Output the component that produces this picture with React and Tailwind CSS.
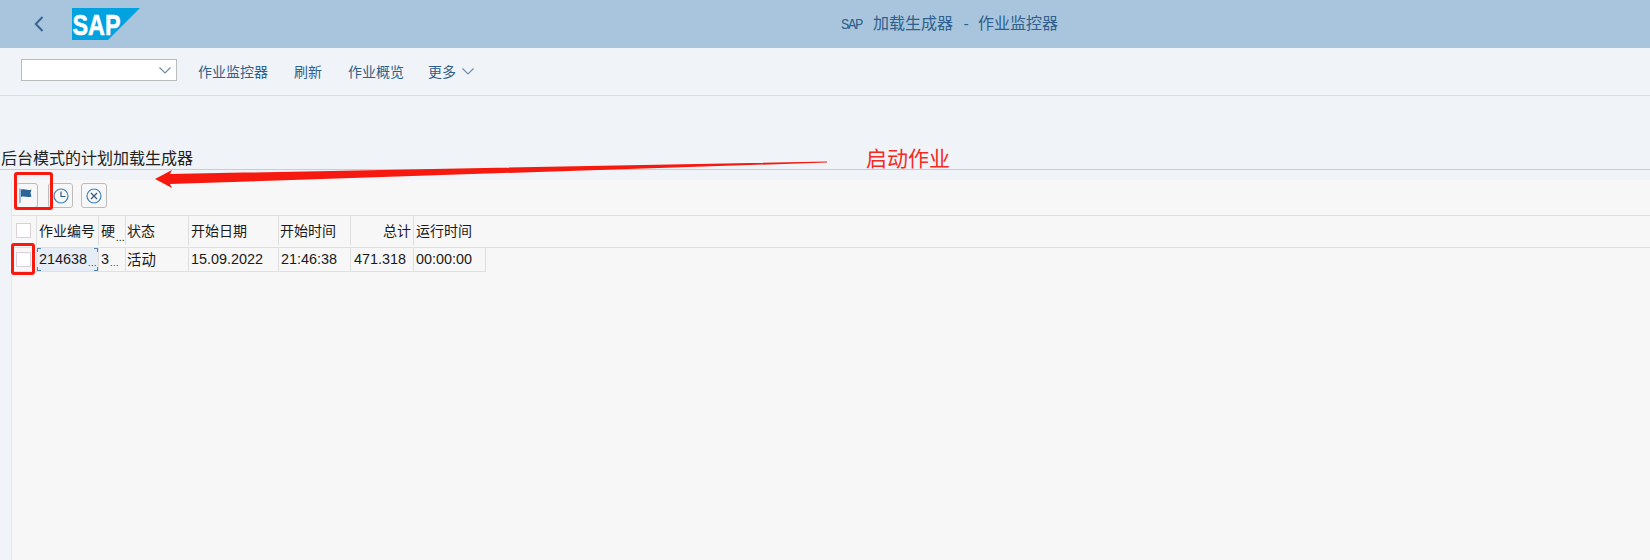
const cjk = { fontFamily: '"Noto Sans CJK SC", sans-serif' };
const mono = { fontFamily: '"Liberation Mono", monospace' };
const data = { fontFamily: '"Liberation Sans", "Noto Sans CJK SC", sans-serif' };

const Chevron = ({ className }) => (
  <svg viewBox="0 0 12 7" className={className} fill="none" stroke="currentColor" strokeWidth="1.2">
    <path d="M0.5 0.5 L6 6 L11.5 0.5" />
  </svg>
);

const Checkbox = () => (
  <div className="w-[15px] h-[15px] bg-white border border-[#d9d0da]" />
);

const ToolButton = ({ children, className = 'w-[26px] justify-center' }) => (
  <button className={`h-[25px] ${className} flex items-center rounded-[3px] border border-[#bcbcbc] bg-[#f7f7f7]`}>
    {children}
  </button>
);

const Cell = ({ w, className = '', children }) => (
  <div
    className={`shrink-0 h-full flex items-center border-r border-[#dedede] text-[#1a1a1a] ${className}`}
    style={{ width: w }}
  >
    {children}
  </div>
);

const Dots = () => <span className="text-[9px] leading-none self-end mb-[3px] ml-[1px] tracking-[0.5px]">...</span>;

const Corner = ({ className }) => <div className={`absolute w-[4px] h-[4px] border-[#4a86b8] ${className}`} />;

const Latin = ({ children }) => <span className="text-[14px] tracking-[-1.4px]" style={mono}>{children}</span>;

export default function App() {
  return (
    <div className="relative w-full h-[560px] overflow-hidden flex flex-col bg-[#f0f4f8]" style={cjk}>
      {/* barra superior */}
      <div className="h-12 shrink-0 bg-[#a9c5dd] flex items-center relative">
        <svg viewBox="0 0 10 16" className="w-[10px] h-[16px] ml-[34px] text-[#3a6491]" fill="none" stroke="currentColor" strokeWidth="2">
          <path d="M8.5 1 L1.8 8 L8.5 15" />
        </svg>
        <svg viewBox="0 0 68 32" className="w-[68px] h-[32px] ml-[28px]">
          <polygon points="0,0 68,0 36,32 0,32" fill="#00a2e0" />
          <text x="0.5" y="27" fontFamily="Liberation Sans" fontWeight="700" fontSize="29" fill="#fff" stroke="#fff" strokeWidth="0.6" textLength="48" lengthAdjust="spacingAndGlyphs">SAP</text>
        </svg>
        <div className="absolute left-[841px] top-[11px] flex items-baseline text-[16px] leading-[22px] text-[#2f5f8c] whitespace-nowrap">
          <Latin>SAP</Latin>
          <span className="ml-[11px]">加载生成器</span>
          <span className="ml-[9px] mr-[9px]"><Latin>-</Latin></span>
          <span>作业监控器</span>
        </div>
      </div>

      {/* toolbar */}
      <div className="h-[48px] shrink-0 flex items-center border-b border-[#d5dfea] pl-[21px] text-[14px] text-[#2f5f8c]">
        <div className="w-[156px] h-[22px] mb-[3px] bg-white border border-[#bcbcbc] flex items-center justify-end pr-[5px] mr-[21px]">
          <Chevron className="w-[12px] h-[7px] text-[#6f8cab]" />
        </div>
        <span className="mr-[26px]">作业监控器</span>
        <span className="mr-[26px]">刷新</span>
        <span className="mr-[24px]">作业概览</span>
        <span className="mr-[6px]">更多</span>
        <Chevron className="w-[12px] h-[7px] text-[#6f8cab]" />
      </div>

      {/* titulo */}
      <div className="h-[74px] shrink-0 flex items-end border-b border-[#c9cdd2]">
        <div className="text-[16px] leading-[22px] text-[#222] ml-[1px] mb-[1px]">后台模式的计划加载生成器</div>
      </div>

      {/* panel */}
      <div className="flex-1 pl-[11px] pt-[10px]">
        <div className="h-full bg-[#f7f7f7] border-l border-[#e0e6ec]">
          <div className="h-[35px] flex items-start pt-[3px] pl-[4px]">
            <ToolButton className="w-[22px] justify-start pl-[2px] mr-[10px]">
              <svg viewBox="0 0 13 15" className="w-[13px] h-[15px]">
                <path d="M1 0.5 V15" stroke="#7fa9d0" strokeWidth="1.5" />
                <path d="M2 1.5 C5 0.5 8 3 12.5 1.5 L11.5 5 L12.5 8.5 C8 10 5 7.5 2 9 Z" fill="#2c6499" />
              </svg>
            </ToolButton>
            <ToolButton className="w-[25px] justify-center mr-[8px]">
              <svg viewBox="0 0 16 16" className="w-[16px] h-[16px]" fill="none" stroke="#3d81bd" strokeWidth="1.2">
                <circle cx="8" cy="8" r="7" />
                <path d="M8 3.5 V8.5 H12.5" stroke="#35597c" />
              </svg>
            </ToolButton>
            <ToolButton className="w-[26px] justify-center">
              <svg viewBox="0 0 16 16" className="w-[16px] h-[16px]" fill="none" stroke="#3d81bd" strokeWidth="1.2">
                <circle cx="8" cy="8" r="7" />
                <path d="M5 5 L11 11 M11 5 L5 11" stroke="#35597c" />
              </svg>
            </ToolButton>
          </div>

          {/* tabla */}
          <div className="h-[33px] flex border-y border-[#e0e0e0] text-[14px] pb-[2px]">
            <Cell w={25} className="pr-[2px] justify-center"><Checkbox /></Cell>
            <Cell w={62} className="pl-[2px]">作业编号</Cell>
            <Cell w={27} className="pl-[2px]"><span>硬</span><Dots /></Cell>
            <Cell w={63} className="pl-[1px]">状态</Cell>
            <Cell w={90} className="pl-[2px]">开始日期</Cell>
            <Cell w={72} className="pl-[1px]">开始时间</Cell>
            <Cell w={63} className="justify-end pr-[2px]">总计</Cell>
            <div className="flex items-center px-[2px] text-[#1a1a1a]">运行时间</div>
          </div>
          <div className="h-[24px] flex border-b border-[#e0e0e0] w-[474px] text-[14.4px]" style={data}>
            <Cell w={25} className="pr-[2px] justify-center"><Checkbox /></Cell>
            <Cell w={62} className="relative bg-[#e6edf6] pl-[2px]">
              214638<Dots />
              <Corner className="left-0 top-0 border-l border-t" />
              <Corner className="right-0 top-0 border-r border-t" />
              <Corner className="left-0 bottom-0 border-l border-b" />
              <Corner className="right-0 bottom-0 border-r border-b" />
            </Cell>
            <Cell w={27} className="pl-[2px]">3<Dots /></Cell>
            <Cell w={63} className="pl-[1px] pb-[2px]"><span style={cjk}>活动</span></Cell>
            <Cell w={90} className="pl-[2px]">15.09.2022</Cell>
            <Cell w={72} className="pl-[2px]">21:46:38</Cell>
            <Cell w={63} className="justify-end pr-[7px]">471.318</Cell>
            <Cell w={72} className="pl-[2px]">00:00:00</Cell>
          </div>
        </div>
      </div>

      {/* anotaciones */}
      <div className="absolute left-[14px] top-[172px] w-[39px] h-[38px] border-[3px] border-[#f5190f] rounded-[3px]" />
      <div className="absolute left-[11px] top-[243px] w-[24px] h-[32px] border-[3px] border-[#f5190f] rounded-[3px]" />
      <svg className="absolute left-[150px] top-[155px] w-[690px] h-[40px]" viewBox="0 0 690 40">
        <polygon points="5,24 22,15 20,19 677,6.5 677,7.5 20,29 22,33" fill="#f5190f" />
      </svg>
      <div className="absolute left-[866px] top-[143px] text-[21px] leading-[28px] text-[#f5291f]">启动作业</div>
    </div>
  );
}
